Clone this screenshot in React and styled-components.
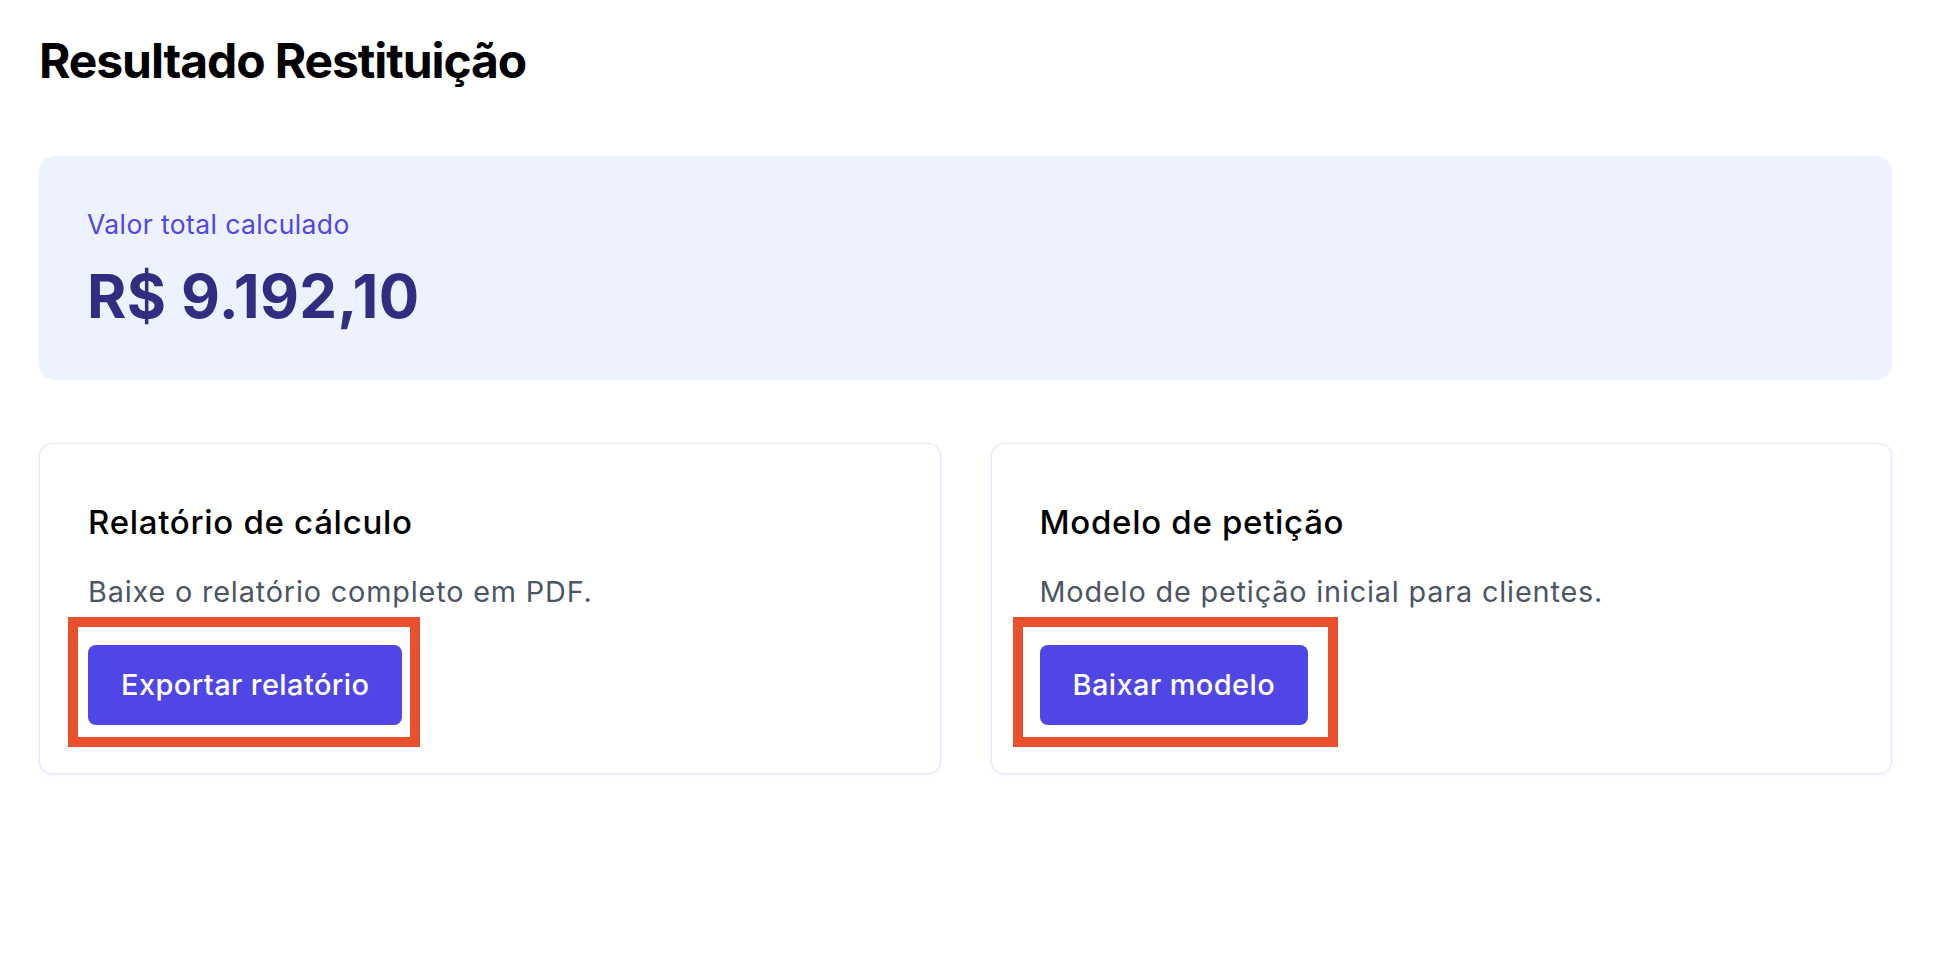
import React from 'react';
import styled, { createGlobalStyle } from 'styled-components';

const GlobalStyle = createGlobalStyle`
    * {
        box-sizing: border-box;
    }
    body {
        margin: 0;
        background: #ffffff;
        font-family: Inter, "Liberation Sans", sans-serif;
        -webkit-font-smoothing: antialiased;
    }
`

const Page = styled.div`
    padding: 32px 44px 60px 39px;
`

const Title = styled.h1`
    margin: 0;
    font-size: 48px;
    line-height: 58px;
    font-weight: 700;
    letter-spacing: -1.1px;
    color: #000000;
`

const TotalPanel = styled.section`
    margin-top: 66px;
    padding: 49px 48px 52px;
    border-radius: 16px;
    background-color: #eef2ff;
`

const TotalLabel = styled.div`
    font-size: 26.5px;
    line-height: 38.4px;
    letter-spacing: 0.4px;
    color: #4f46e5;
`

const TotalValue = styled.div`
    margin-top: 21px;
    font-size: 60px;
    line-height: 64px;
    font-weight: 700;
    letter-spacing: 0.4px;
    color: #312e81;
`

const CardGrid = styled.div`
    margin-top: 63px;
    display: grid;
    grid-template-columns: 1fr 1fr;
    gap: 50px;
`

const Card = styled.div`
    border: 1px solid #dfe6fd;
    border-radius: 13px;
    padding: 56px 48px 48px;
    background: #ffffff;
    box-shadow: 0 1px 3px rgba(79, 70, 229, 0.1);
`

const CardTitle = styled.h2`
    margin: 0;
    font-size: 33px;
    line-height: 44.8px;
    font-weight: 500;
    letter-spacing: 0.7px;
    color: #000000;
`

const CardText = styled.p`
    margin: 25px 0 0;
    font-size: 28.8px;
    line-height: 44.8px;
    letter-spacing: 0.84px;
    color: #4b5563;
`

// red annotation frame drawn over the screenshot
const Highlight = styled.div`
    position: relative;
    display: inline-block;
    margin-top: 30px;
    &::after {
        content: "";
        position: absolute;
        top: -28px;
        bottom: -22px;
        left: ${props => -props.$left}px;
        right: ${props => -props.$right}px;
        border: 10px solid #e9502e;
        pointer-events: none;
    }
`

const Button = styled.button`
    display: block;
    border: none;
    border-radius: 8px;
    padding: 17.6px 33px;
    background-color: #4f46e5;
    color: #ffffff;
    font-family: inherit;
    font-size: 29px;
    line-height: 44.8px;
    font-weight: 500;
    letter-spacing: 0.4px;
    cursor: pointer;
`

const cards = [
    {
        title: "Relatório de cálculo",
        text: "Baixe o relatório completo em PDF.",
        action: "Exportar relatório",
        frame: { left: 20, right: 18 },
    },
    {
        title: "Modelo de petição",
        text: "Modelo de petição inicial para clientes.",
        action: "Baixar modelo",
        frame: { left: 27, right: 30 },
    },
]

const App = () => {
    return (<>
        <GlobalStyle />
        <Page>
            <Title>Resultado Restituição</Title>
            <TotalPanel>
                <TotalLabel>Valor total calculado</TotalLabel>
                <TotalValue>R$ 9.192,10</TotalValue>
            </TotalPanel>
            <CardGrid>
                {cards.map(card =>
                    <Card key={card.title}>
                        <CardTitle>{card.title}</CardTitle>
                        <CardText>{card.text}</CardText>
                        <Highlight $left={card.frame.left} $right={card.frame.right}>
                            <Button>{card.action}</Button>
                        </Highlight>
                    </Card>)}
            </CardGrid>
        </Page>
    </>);
}

export default App;
